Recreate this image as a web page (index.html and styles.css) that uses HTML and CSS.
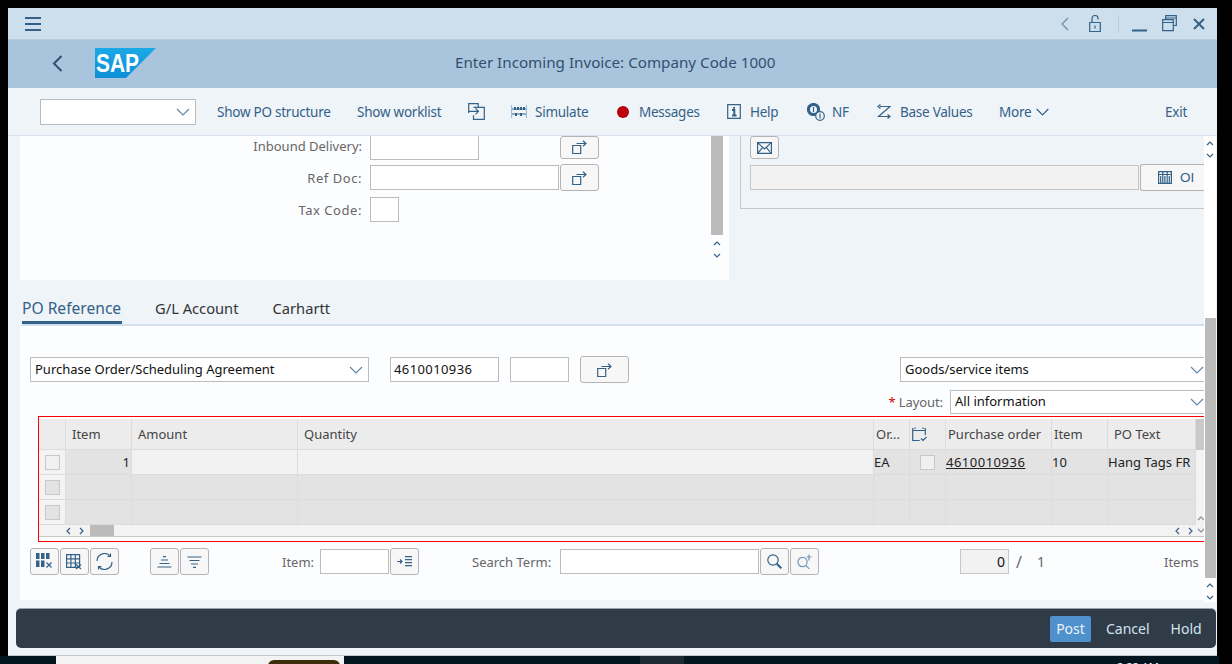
FILE: index.html
```html
<!DOCTYPE html>
<html lang="en">
<head>
<meta charset="utf-8">
<title>Enter Incoming Invoice</title>
<link rel="stylesheet" href="styles.css">
</head>
<body>
<div class="window">
  <header class="topbar">
    <svg class="ico ham" width="16" height="14" viewBox="0 0 16 14"><path class="thick" d="M0 1h16M0 7h16M0 13h16"/></svg>
    <div class="win-tools">
      <svg class="ico w-chev" width="8" height="14" viewBox="0 0 8 14"><path d="M7 1 1 7l6 6"/></svg>
      <svg class="ico w-lock" width="12" height="17" viewBox="0 0 12 17"><path d="M3 7V3.500a3 3 0 0 1 6 0v1M.7 7.500h10.600v9H.7zM6 10.500v3"/></svg>
      <span class="w-sep"></span>
      <svg class="ico w-min" width="15" height="17" viewBox="0 0 15 17"><path class="thick" d="M0 15.500h15"/></svg>
      <svg class="ico w-max" width="15" height="17" viewBox="0 0 15 17"><path d="M.7 4.700h10.600v11H.7zM.7 7.500h10.600M3.700 4.500V.7h10.600v9.800h-3M3.700 3h10.600"/></svg>
      <svg class="ico w-close" width="12" height="12" viewBox="0 0 12 12"><path class="thick" d="m1 1 10 10M11 1 1 11"/></svg>
    </div>
  </header>

  <div class="shell">
    <svg class="ico back" width="11" height="17" viewBox="0 0 11 17"><path class="thick" d="M9.500 1 2 8.500l7.500 7.500"/></svg>
    <svg class="logo" width="62" height="30" viewBox="0 0 62 30">
      <defs><linearGradient id="sapg" x1="0" y1="0" x2="0" y2="1"><stop offset="0" stop-color="#1ca9e6"/><stop offset="1" stop-color="#0d8fd6"/></linearGradient></defs>
      <polygon points="0,0 61,0 31,30 0,30" fill="url(#sapg)"/>
      <text class="logo-text" x="1" y="24" textLength="43" lengthAdjust="spacingAndGlyphs">SAP</text>
    </svg>
    <h1 class="title">Enter Incoming Invoice: Company Code 1000</h1>
  </div>

  <nav class="toolbar">
    <div class="combo tb-combo"><svg class="chev" width="14" height="8" viewBox="0 0 14 8"><path d="m1 1 6 6 6-6"/></svg></div>
    <span class="tb">Show PO structure</span>
    <span class="tb">Show worklist</span>
    <span class="tb"><svg class="ico" width="17" height="17" viewBox="0 0 17 17"><path d="M.7 10V.7h9.500V4M5.500 4.300h10.800v12H5.500v-4M1 8.300h9.500M7.500 5.300l3 3-3 3"/></svg></span>
    <span class="tb"><svg class="ico" width="16" height="13" viewBox="0 0 16 13"><path class="pale" d="M.5 0v13M15.500 0v13"/><path d="M1 4h14M1 9h14"/><path class="thick" d="M4 2v3M7 2v3M10 2v3M13 2v3M5 8v3M10 8v3"/></svg><span class="tb-label l8">Simulate</span></span>
    <span class="tb"><span class="dot"></span><span class="tb-label l10">Messages</span></span>
    <span class="tb"><svg class="ico" width="14" height="15" viewBox="0 0 14 15"><path d="M.7.700h12.600v13.600H.7z"/><path class="thick" d="M5 6h2.300v5.500M5 11.500h4.500M7 3v1.800"/></svg><span class="tb-label l9">Help</span></span>
    <span class="tb"><svg class="ico" width="18" height="18" viewBox="0 0 18 18"><circle cx="6.500" cy="6.500" r="6" fill="#346187"/><circle cx="6.500" cy="6.500" r="3.500" fill="#eff4f9" stroke="none"/><path d="M6.500 4v5"/><circle cx="13" cy="13" r="4.300" fill="#eff4f9"/><path d="M13 10.500v5"/></svg><span class="tb-label l7">NF</span></span>
    <span class="tb"><svg class="ico" width="14" height="15" viewBox="0 0 14 15"><path d="M3 2.500h10L1.500 12.500H12M3.500 .5 1 2.500l2.500 2M10.500 10.500l2.500 2-2.500 2"/></svg><span class="tb-label l9">Base Values</span></span>
    <span class="tb">More<svg class="ico more" width="13" height="8" viewBox="0 0 13 8"><path d="m.7 1 5.800 5.800L12.300 1"/></svg></span>
    <span class="tb">Exit</span>
  </nav>

  <main class="content">
    <section class="upper">
      <div class="panel-left">
        <div class="form-row first">
          <label class="lbl">Inbound Delivery:</label>
          <span class="field w109 no-top"></span>
          <button class="btn btn-link no-top push"><svg class="ico" width="15" height="14" viewBox="0 0 15 14"><path d="M.7 5.500h8v8h-8zM4.500 3.500H14M11 .7l3 2.800-3 2.800"/></svg></button>
        </div>
        <div class="form-row">
          <label class="lbl spaced">Ref Doc:</label>
          <span class="field w189"></span>
          <button class="btn btn-link"><svg class="ico" width="15" height="14" viewBox="0 0 15 14"><path d="M.7 5.500h8v8h-8zM4.500 3.500H14M11 .7l3 2.800-3 2.800"/></svg></button>
        </div>
        <div class="form-row">
          <label class="lbl spaced">Tax Code:</label>
          <span class="field w29"></span>
        </div>
        <div class="mini-scroll"><span class="thumb"></span>
          <svg class="arrows" width="8" height="20" viewBox="0 0 8 20"><path d="m1 5 3-3 3 3M1 14l3 3 3-3"/></svg>
        </div>
      </div>
      <div class="panel-right">
        <button class="btn mail no-top"><svg class="ico" width="15" height="12" viewBox="0 0 15 12"><path d="M.6.600h13.800v10.800H.6zM.6.600 7.500 7l6.900-6.400M.6 11.400l5-5.800M14.400 11.400l-5-5.800"/></svg></button>
        <div class="oi-row">
          <span class="field ro wide"></span>
          <button class="btn oi"><svg class="ico" width="14" height="13" viewBox="0 0 14 13"><path d="M.6.600h12.800v11.800H.6zM.6 3.500h12.800M4.800.6v11.800M9.200.6v11.800M2.700 5v7M6.900 5v7M11.300 5v7"/></svg><span class="oi-label">OI</span></button>
        </div>
      </div>
    </section>

    <div class="tabs">
      <span class="tab active">PO Reference</span>
      <span class="tab">G/L Account</span>
      <span class="tab">Carhartt</span>
    </div>

    <section class="lower">
      <div class="ref-row">
        <div class="combo w339"><span>Purchase Order/Scheduling Agreement</span><svg class="chev" width="14" height="8" viewBox="0 0 14 8"><path d="m1 1 6 6 6-6"/></svg></div>
        <span class="field w109 val"><span>4610010936</span></span>
        <span class="field w59"></span>
        <button class="btn btn-wide"><svg class="ico" width="15" height="14" viewBox="0 0 15 14"><path d="M.7 5.500h8v8h-8zM4.500 3.500H14M11 .7l3 2.800-3 2.800"/></svg></button>
        <div class="combo w304 clip"><span>Goods/service items</span><svg class="chev" width="14" height="8" viewBox="0 0 14 8"><path d="m1 1 6 6 6-6"/></svg></div>
      </div>
      <div class="layout-row">
        <label class="lbl"><span class="req">*</span> Layout:</label>
        <div class="combo w254 clip"><span>All information</span><svg class="chev" width="14" height="8" viewBox="0 0 14 8"><path d="m1 1 6 6 6-6"/></svg></div>
      </div>

      <div class="table">
        <div class="grid head">
          <div class="c sel"></div>
          <div class="c">Item</div>
          <div class="c">Amount</div>
          <div class="c">Quantity</div>
          <div class="c tight">Or...</div>
          <div class="c tight"><svg class="ico" width="15" height="15" viewBox="0 0 15 15"><path d="M.7 3.500h12.600M.7 1v12.500h7M13.300 1v7M3 .5v1.500M11 .5v1.500M9 11.500l2 2 3.500-3.500"/></svg></div>
          <div class="c tight">Purchase order</div>
          <div class="c tight">Item</div>
          <div class="c pot">PO Text</div>
          <div class="c end"></div>
        </div>
        <div class="grid row">
          <div class="c sel"><span class="check"></span></div>
          <div class="c num">1</div>
          <div class="c light"></div>
          <div class="c light"></div>
          <div class="c flush">EA</div>
          <div class="c chk"><span class="check"></span></div>
          <div class="c flush"><a class="link">4610010936</a></div>
          <div class="c flush">10</div>
          <div class="c flush">Hang Tags FR</div>
          <div class="c end"></div>
        </div>
        <div class="grid row">
          <div class="c sel"><span class="check"></span></div>
          <div class="c"></div><div class="c"></div><div class="c"></div><div class="c"></div><div class="c"></div><div class="c"></div><div class="c"></div><div class="c"></div>
          <div class="c end"></div>
        </div>
        <div class="grid row">
          <div class="c sel"><span class="check"></span></div>
          <div class="c"></div><div class="c"></div><div class="c"></div><div class="c"></div><div class="c"></div><div class="c"></div><div class="c"></div><div class="c"></div>
          <div class="c end"></div>
        </div>
        <div class="hscroll">
          <svg class="arrows-h" width="18" height="8" viewBox="0 0 18 8"><path d="M4 1 1 4l3 3M14 1l3 3-3 3"/></svg>
          <span class="hthumb"></span>
          <svg class="arrows-h right" width="18" height="8" viewBox="0 0 18 8"><path d="M4 1 1 4l3 3M14 1l3 3-3 3"/></svg>
          <svg class="arrows-v" width="8" height="20" viewBox="0 0 8 20"><path d="m1 5 3-3 3 3M1 14l3 3 3-3"/></svg>
        </div>
      </div>

      <div class="bottom-tools">
        <div class="group">
          <button class="btn"><svg class="ico" width="18" height="17" viewBox="0 0 18 17"><path class="fill" d="M0 0h3.500v6H0zM5 0h3.500v6H5zM10 0h3.500v6H10zM0 7.500h3.500V14H0zM5 7.500h3.500V14H5z"/><path d="M10.500 9.500l5 5M15.500 9.500l-5 5"/></svg></button>
          <button class="btn"><svg class="ico" width="17" height="16" viewBox="0 0 17 16"><path d="M.6.600h13v12.800H.6zM.6 4.800h13M.6 9h13M4.900.6v12.800M9.300.6v12.800M10 10.500l5 4.500M15 10.500 10 15"/></svg></button>
          <button class="btn"><svg class="ico" width="17" height="17" viewBox="0 0 17 17"><path d="M1 8a7.500 7.500 0 0 1 13-5M16 9a7.500 7.500 0 0 1-13 5M14.500 .5v3h-3M2.500 16.500v-3h3"/></svg></button>
        </div>
        <div class="group">
          <button class="btn"><svg class="ico" width="15" height="12" viewBox="0 0 15 12"><path d="M6 .7h3M4 4h7M2.500 7.500h10M.5 11h14"/></svg></button>
          <button class="btn"><svg class="ico" width="15" height="12" viewBox="0 0 15 12"><path d="M.5 1h14M2.500 4.500h10M4 8h7M6 11.300h3"/></svg></button>
        </div>
        <label class="lbl">Item:</label>
        <div class="group">
          <span class="field w69"></span>
          <button class="btn"><svg class="ico" width="15" height="11" viewBox="0 0 15 11"><path d="M0 5.500h5M3 3.500l2 2-2 2M8 .7h7M8 3.700h7M8 6.700h7M8 9.700h7"/></svg></button>
        </div>
        <label class="lbl">Search Term:</label>
        <div class="group">
          <span class="field w199"></span>
          <button class="btn"><svg class="ico" width="15" height="15" viewBox="0 0 15 15"><circle cx="6" cy="6" r="5.200"/><path class="thick" d="m9.800 9.800 4.500 4.500"/></svg></button>
          <button class="btn"><svg class="ico light-ico" width="15" height="15" viewBox="0 0 15 15"><circle cx="5.500" cy="8" r="4.600"/><path d="m8.800 11.300 3.500 3.500M12 .5v6M9.500 3h5"/></svg></button>
        </div>
        <div class="counter">
          <span class="field ro w49 count">0</span>
          <span class="slash">/</span>
          <span class="total">1</span>
        </div>
        <label class="lbl items">Items</label>
      </div>
      <div class="red-frame"></div>
    </section>

    <div class="page-scroll">
      <svg class="arrows top" width="8" height="20" viewBox="0 0 8 20"><path d="m1 5 3-3 3 3M1 14l3 3 3-3"/></svg>
      <span class="page-thumb"></span>
      <svg class="arrows bot" width="8" height="20" viewBox="0 0 8 20"><path d="m1 5 3-3 3 3M1 14l3 3 3-3"/></svg>
    </div>
  </main>

  <footer class="footer">
    <span class="f-btn primary">Post</span>
    <span class="f-btn cancel">Cancel</span>
    <span class="f-btn hold">Hold</span>
  </footer>
</div>
<div class="taskbar">
  <div class="tb-app"><span class="tb-brown"></span></div>
  <span class="tb-active"></span>
  <span class="clock">2:22 AM</span>
</div>
</body>
</html>
```
FILE: styles.css
```css
* { box-sizing: border-box; }
html, body { margin: 0; padding: 0; }
body {
  width: 1232px; height: 664px; overflow: hidden; background: #000;
  font-family: "Noto Sans", "Open Sans", sans-serif; font-size: 13px; color: #333;
}
.ico { fill: none; stroke: #346187; stroke-width: 1.200; flex: none; display: block; }
.ico .thick { stroke-width: 2; }
.ico .fill { fill: #346187; stroke: none; }
.ico .pale { stroke: #9dbcd8; }
.light-ico { stroke: #6f97ba; }

.window {
  margin: 8px 0 0 8px; width: 1209px; height: 648px; background: #eff4f9;
  display: flex; flex-direction: column; overflow: hidden;
  border-bottom: 1px solid #c4c8cc;
}

/* top bar */
.topbar {
  height: 32px; flex: none; background: #cddeed; border-bottom: 1px solid #b9c9d8;
  display: flex; align-items: center; padding-left: 17px; position: relative;
}
.win-tools { margin-left: auto; display: flex; align-items: center; padding-right: 12px; }
.w-chev { stroke: #6c8ba8; margin-right: 20px; }
.w-lock { margin-right: 17px; }
.w-sep { width: 1px; height: 18px; background: #b8cbdc; margin-right: 13px; }
.w-min { margin-right: 15px; }
.w-max { margin-right: 16px; }

/* shell */
.shell {
  height: 48px; flex: none; background: #a9c5de;
  display: grid; grid-template-columns: 43px 62px 1fr; align-items: center; padding-left: 44px;
}
.back { stroke: #32506e; margin-bottom: 2px; }
.logo { display: block; margin-bottom: 2px; }
.logo-text { fill: #fff; font-family: "Liberation Sans", sans-serif; font-weight: 700; font-size: 26px; }
.title {
  margin: 0 0 4px 298px; font-size: 15.200px; font-weight: 400; color: #32506e; white-space: nowrap;
}

/* toolbar */
.toolbar {
  height: 48px; flex: none; padding-left: 32px; border-bottom: 1px solid #d5e2ef;
  display: grid; align-items: center;
  grid-template-columns: 177px 140px 111px 43px 106px 110px 80px 70px 122px 166px 52px;
}
.tb { display: flex; align-items: center; color: #346187; font-size: 13.500px; letter-spacing: -.25px; white-space: nowrap; }
.l7 { margin-left: 7px; } .l8 { margin-left: 8px; } .l9 { margin-left: 9px; } .l10 { margin-left: 10px; }
.dot { width: 12px; height: 12px; border-radius: 50%; background: #b9000b; }
.more { margin-left: 5px; }

.combo {
  height: 25px; background: #fff; border: 1px solid #bcbcbc;
  display: flex; align-items: center; justify-content: space-between;
  padding: 0 5px 0 4px; color: #111; font-size: 13px; flex: none;
}
.combo span { margin-top: -2px; }
.chev { fill: none; stroke: #5b84a8; stroke-width: 1.100; flex: none; }
.tb-combo { width: 156px; height: 26px; justify-content: flex-end; }
.w339 { width: 339px; }
.w304 { width: 304px; padding-right: 0; border-right: 0; overflow: hidden; }
.w254 { width: 254px; height: 24px; padding-right: 0; border-right: 0; overflow: hidden; }

/* content */
.content { height: 472px; flex: none; padding-left: 12px; position: relative; overflow: hidden; }
.upper { height: 144px; display: grid; grid-template-columns: 709px 11px 464px; }
.panel-left { grid-column: 1; background: #fcfdff; position: relative; overflow: hidden; }
.panel-right {
  grid-column: 3; height: 73px; padding-left: 9px;
  border-left: 1px solid #c8c8c8; border-bottom: 1px solid #c8c8c8; overflow: hidden;
}
.form-row { display: flex; align-items: center; height: 25px; margin-top: 7px; }
.form-row.first { height: 22px; margin-top: 0; }
.form-row.first .lbl { margin-top: -2px; }
.lbl { color: #666; font-size: 13px; white-space: nowrap; }
.spaced { letter-spacing: .55px; }
.form-row .lbl { width: 342px; text-align: right; margin-right: 8px; }
.field { display: flex; align-items: center; height: 25px; background: #fff; border: 1px solid #bcbcbc; flex: none; }
.no-top { border-top: 0; }
.w29 { width: 29px; } .w49 { width: 49px; } .w59 { width: 59px; } .w69 { width: 69px; }
.w109 { width: 109px; } .w189 { width: 189px; } .w199 { width: 199px; }
.ro { background: #f2f2f2; border-color: #c6c6c6; }
.wide { width: 389px; }

.btn {
  width: 29px; height: 27px; padding: 0; flex: none; background: #f7f7f7;
  border: 1px solid #b4b4b4; border-radius: 3px;
  display: flex; align-items: center; justify-content: center;
}
.form-row .btn { width: 39px; margin-left: 1px; }
.form-row .push { margin-left: 81px; height: 23px; }
.mail { height: 23px; }
.oi-row { display: flex; align-items: center; margin-top: 5px; margin-right: -2px; }
.oi { width: 70px; margin-left: 1px; border-right: 0; border-radius: 3px 0 0 3px; justify-content: flex-start; padding-left: 17px; }
.oi-label { margin-left: 8px; color: #346187; font-size: 13.500px; }
.mini-scroll { position: absolute; left: 691px; top: 0; width: 12px; height: 130px; }
.thumb { display: block; width: 12px; height: 99px; background: #bbb; }
.arrows { display: block; fill: none; stroke: #346187; stroke-width: 1.200; margin: 5px auto 0; }

/* tabs */
.tabs {
  height: 46px; margin-left: 2px; width: 1182px; padding-top: 18px;
  display: flex; border-bottom: 2px solid #d1e0ee; font-size: 14.700px; color: #333;
}
.tab { height: 26px; white-space: nowrap; line-height: 20px; margin-right: 34px; }
.tab.active { color: #346187; border-bottom: 3px solid #346187; width: 100px; margin-right: 33px; font-size: 15.600px; }

/* lower panel */
.lower { width: 1184px; height: 274px; background: #fcfdff; position: relative; padding: 31px 0 0 10px; overflow: hidden; }
.ref-row { display: flex; align-items: center; height: 25px; }
.ref-row .val { margin-left: 21px; padding-left: 3px; color: #111; font-size: 13px; letter-spacing: .4px; }
.val span { margin-top: -2px; }
.ref-row .w59 { margin-left: 11px; }
.btn-wide { width: 49px; margin-left: 11px; }
.ref-row .w304 { margin-left: 271px; }
.layout-row { display: flex; justify-content: flex-end; align-items: center; height: 24px; margin-top: 8px; }
.layout-row .lbl { margin-right: 7px; margin-top: -1px; letter-spacing: -.1px; }
.req { color: #c00; }

/* table */
.table { width: 1165px; margin: 5px 0 0 9px; height: 118px; background: #f3f3f3; border-bottom: 1px solid #c9c9c9; position: relative; }
.grid {
  display: grid;
  grid-template-columns: 27px 66px 166px 576px 36px 36px 106px 56px 88px 8px;
}
.c { border-right: 1px solid #dcdcdc; border-bottom: 1px solid #dcdcdc; display: flex; align-items: center; white-space: nowrap; overflow: hidden; background: #e3e3e3; color: #333; font-size: 13px; }
.head { height: 31px; }
.head .c { background: #ececec; padding-left: 6px; color: #444; }
.head .tight { padding-left: 2px; }
.head .pot { padding-left: 6px; }
.head .c.end { background: #c9c9c9; border: 0; }
.head .sel { background: #ececec; }
.row { height: 25px; }
.row .c { color: #222; }
.row .sel { background: #f3f3f3; justify-content: center; }
.row .end { background: #f3f3f3; border: 0; }
.row .num { justify-content: flex-end; padding-right: 1px; }
.row .light { background: #f2f2f2; }
.row .chk { justify-content: center; }
.check { width: 15px; height: 15px; border: 1px solid #c8c8c8; background: #f0f0f0; display: block; }
.row:nth-child(3) .check, .row:nth-child(4) .check { background: #e3e3e3; }
.link { color: #222; text-decoration: underline; letter-spacing: .5px; }

.hscroll { height: 11px; display: flex; align-items: center; position: relative; padding-left: 27px; }
.arrows-h { fill: none; stroke: #346187; stroke-width: 1.200; flex: none; }
.arrows-h.right { margin-left: 1061px; }
.hthumb { width: 24px; height: 11px; background: #bbb; margin-left: 6px; }
.arrows-v { position: absolute; right: -1px; top: -10px; fill: none; stroke: #7b8f9f; stroke-width: 1.200; }

.red-frame { position: absolute; left: 18px; top: 90px; width: 1175px; height: 126px; border: 1px solid #f00; z-index: 5; }

/* bottom tools */
.bottom-tools {
  margin-top: 11px; height: 27px; display: grid; align-items: center;
  grid-template-columns: 120px 132px 38px 152px 88px 400px 204px 40px;
}
.group { display: flex; gap: 1px; align-items: center; }
.counter { display: flex; align-items: center; }
.count { justify-content: flex-end; padding-right: 3px; color: #111; font-size: 14px; }
.slash { margin-left: 7px; color: #666; font-size: 16px; }
.total { margin-left: 15px; color: #666; font-size: 14px; }

/* page scrollbar */
.page-scroll { position: absolute; left: 1196px; top: 0; width: 12px; height: 466px; background: #fff; z-index: 2; }
.page-scroll .top { position: absolute; left: 2px; top: 4px; margin: 0; }
.page-thumb { position: absolute; left: 1px; top: 182px; width: 11px; height: 260px; background: #bbb; }
.page-scroll .bot { position: absolute; left: 2px; top: 446px; margin: 0; }

/* footer */
.footer {
  height: 40px; flex: none; margin: 0 1px 0 8px; background: #2f3c48; border-radius: 5px;
  border-top: 1px solid #9aa2a8;
  display: flex; align-items: center; font-size: 14px; color: #d3e2ef;
}
.f-btn { white-space: nowrap; }
.primary {
  margin-left: 1034px; width: 41px; height: 26px; background: #4f91cc; border-radius: 2px;
  display: flex; align-items: center; justify-content: center; color: #eaf2f9;
}
.cancel { margin-left: 15px; }
.hold { margin-left: 21px; }

/* taskbar */
.taskbar {
  width: 1219px; height: 8px; background: #02161f; display: flex; position: relative; overflow: hidden;
}
.tb-app { margin-left: 56px; width: 288px; height: 8px; background: #f3f3f3; position: relative; }
.tb-brown { display: block; margin: 4px 0 0 212px; width: 72px; height: 8px; background: #3d2c0e; border-radius: 6px 6px 0 0; }
.tb-active { margin-left: 296px; width: 44px; height: 8px; background: #1d2b33; }
.clock { margin-left: 433px; margin-top: 4px; color: #fff; font-size: 11px; line-height: 14px; white-space: nowrap; }
```
